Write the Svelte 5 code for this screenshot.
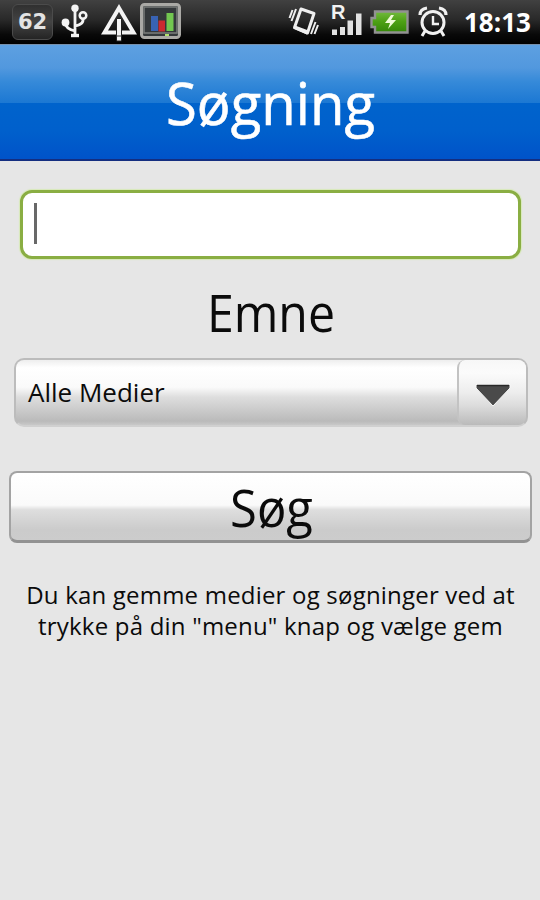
<script lang="ts">
  let query = '';
  let category = 'Alle Medier';
  let time = '18:13';
  let batteryLevel = '62';
</script>

<div class="screen">
  <div class="status-bar">
    <div class="level">{batteryLevel}</div>
    <svg class="usb" width="28" height="34" viewBox="0 0 28 34" fill="none" stroke="#f4f4f4" stroke-width="2.8">
      <path d="M14 4V31M4 19Q5 25 14 27M14 22Q24 20 21.500 14" />
      <circle cx="14" cy="4.200" r="3.700" fill="#f4f4f4" stroke="none" />
      <circle cx="4.500" cy="18.500" r="3.900" fill="#f4f4f4" stroke="none" />
      <circle cx="22" cy="11.500" r="3.300" stroke-width="2.500" />
      <path d="M10 31.500h8" stroke-width="3.400" />
    </svg>
    <svg class="warn" width="36" height="38" viewBox="0 0 36 38">
      <path d="M18 4L32.500 28.500H3.500Z" fill="none" stroke="#f4f4f4" stroke-width="4" />
      <path d="M15.500 14.500h5v22.500h-5z" fill="#f4f4f4" stroke="#222" stroke-width="1" />
      <path d="M15 32h6" stroke="#333" stroke-width="1" />
    </svg>
    <svg class="chart" width="42" height="37" viewBox="0 0 42 37">
      <rect x="1.500" y="1.500" width="38" height="33" rx="3" fill="#34383a" stroke="#aaa9a5" stroke-width="3" />
      <rect x="4" y="4" width="33" height="26" fill="none" stroke="#7b7e7c" stroke-width="1.500" />
      <rect x="11" y="13" width="7" height="15" fill="#3863b4" />
      <rect x="18.500" y="17.500" width="6.500" height="11" fill="#cb2a30" />
      <rect x="26.500" y="10" width="7" height="18" fill="#72c750" />
      <rect x="25" y="31" width="4" height="2" fill="#b1e26c" />
    </svg>
    <div class="spacer"></div>
    <svg class="vibrate" width="31" height="32" viewBox="0 0 31 32" fill="none" stroke="#efefef">
      <path d="M13 3L26 7.500L19.500 27L6.500 21.500Z" stroke-width="3" stroke-linejoin="round" />
      <path d="M7 19.500l13.500 5-1.500 4-13.500-6z" fill="#efefef" stroke="none" />
      <path d="M8 3L3.500 15M4.500 4L1.500 12M27.500 16L23 28M30 19l-3.500 9" stroke-width="2" />
    </svg>
    <svg class="signal" width="32" height="36" viewBox="0 0 32 36">
      <text x="0" y="19" class="roaming">R</text>
      <path d="M1 29.500h5v5.500H1zM9 27h5v8H9zM16.500 20.500h5.500v14.500h-5.500zM25 13.500h5.500v21.500h-5.500z" fill="#e2e2e2" />
    </svg>
    <svg class="battery" width="39" height="24" viewBox="0 0 39 24">
      <defs>
        <linearGradient id="charge" x1="0" y1="0" x2="0" y2="1">
          <stop offset="0" stop-color="#73ba3f" />
          <stop offset=".48" stop-color="#4da114" />
          <stop offset="1" stop-color="#348608" />
        </linearGradient>
      </defs>
      <path d="M5 1.500H37.500V22.500H5V17H1.500V8H5Z" fill="url(#charge)" stroke="#929292" stroke-width="2.400" />
      <path d="M21 5L15 13h5l-2 6 8-9h-5l3-5z" fill="#f0fbd9" />
    </svg>
    <svg class="alarm" width="30" height="32" viewBox="0 0 30 32" fill="none" stroke="#f1f1f1">
      <circle cx="15" cy="16.500" r="11" stroke-width="3" />
      <path d="M15 10v8h6" stroke-width="2.400" />
      <path d="M2 9Q2 3 9 2M28 9Q28 3 21 2" stroke-width="3.200" />
      <path d="M7 25l-3 5M23 25l3 5" stroke-width="3" />
    </svg>
    <div class="clock">{time}</div>
  </div>

  <header><h1>Søgning</h1></header>

  <main>
    <label class="search-box">
      <span class="caret"></span>
      <input type="text" aria-label="Søgning" bind:value={query} />
    </label>
    <h2>Emne</h2>
    <button class="spinner">
      <span class="value">{category}</span>
      <span class="arrow">
        <svg width="36" height="24" viewBox="0 0 36 24">
          <path d="M1 1.500H35V5L18 23L1 5Z" fill="#4a4a4a" stroke="#f7f7f7" />
          <path d="M2 2.500H34" stroke="#282828" stroke-width="1.500" />
        </svg>
      </span>
    </button>
    <button class="search-btn"><span>Søg</span></button>
    <p>Du kan gemme medier og søgninger ved at<br />trykke på din "menu" knap og vælge gem</p>
  </main>
</div>

<style>
  :global(body) {
    margin: 0;
    background: #e6e6e6;
  }
  .screen {
    width: 540px;
    height: 900px;
    overflow: hidden;
    background: #e6e6e6;
    color: #0b0b0b;
    font-family: 'Open Sans', 'Noto Sans', sans-serif;
  }
  .status-bar {
    display: flex;
    align-items: flex-start;
    box-sizing: border-box;
    height: 44px;
    padding: 0 10px 0 12px;
    background: linear-gradient(#414141, #292929 45%, #090909 78%, #000);
  }
  .status-bar svg {
    flex: none;
  }
  .level {
    box-sizing: border-box;
    width: 41px;
    height: 36px;
    margin-top: 4px;
    border: 1px solid #4b4b4b;
    border-radius: 6px;
    background: linear-gradient(#303030, #444 50%, #242424);
    color: #e3e3e3;
    font: bold 21px/34px 'DejaVu Sans', sans-serif;
    text-align: center;
  }
  .usb {
    margin: 4px 0 0 8px;
  }
  .warn {
    margin: 4px 0 0 12px;
  }
  .chart {
    margin: 3px 0 0 3px;
  }
  .spacer {
    flex: 1;
  }
  .vibrate {
    margin: 6px 12px 0 0;
  }
  .signal {
    margin-right: 7px;
  }
  .roaming {
    fill: #f2f2f2;
    font: bold 20px 'Liberation Sans', sans-serif;
  }
  .battery {
    margin: 10px 9px 0 0;
  }
  .alarm {
    margin: 6px 16px 0 0;
  }
  .clock {
    width: 66px;
    margin-top: 3px;
    color: #fff;
    font-size: 26px;
    font-weight: bold;
    line-height: 38px;
    white-space: nowrap;
  }
  header {
    box-sizing: border-box;
    height: 117px;
    border-top: 1px solid #7790ac;
    border-bottom: 2px solid #142e80;
    background: linear-gradient(#5da0e1, #5298de 20%, #368ad9 32%, #1c78d3 50.8%, #0063cc 51.2%, #0060cc 75%, #0053c9);
  }
  h1,
  h2 {
    margin: 0;
    font-weight: normal;
    text-align: center;
  }
  h1 {
    padding: 18px 0 0 1px;
    color: #fff;
    font-size: 58px;
    line-height: 80px;
    transform: scaleX(0.97);
    -webkit-text-stroke: 0.6px #fff;
  }
  main {
    display: flex;
    flex-direction: column;
    padding: 29px 8px 0 9px;
  }
  .search-box {
    display: flex;
    box-sizing: border-box;
    height: 69px;
    margin: 0 11px;
    padding: 10px 10px 0 11px;
    border: 3px solid #8aae43;
    border-radius: 12px;
    background: #fff;
    box-shadow: 0 0 1px 1px #d7e9b8;
  }
  .caret {
    width: 3px;
    height: 41px;
    background: #686868;
  }
  input {
    flex: 1;
    min-width: 0;
    height: 42px;
    padding: 0 6px;
    border: 0;
    outline: 0;
    background: none;
    font: 27px 'Open Sans', sans-serif;
  }
  h2 {
    margin-top: 18px;
    padding-left: 1px;
    font-size: 51px;
    line-height: 70px;
    transform: scaleX(0.945);
  }
  button {
    box-sizing: border-box;
    padding: 0;
    color: #0b0b0b;
    font-family: inherit;
  }
  .spinner {
    display: flex;
    width: 514px;
    height: 69px;
    margin: 11px 0 0 5px;
    border: 2px solid #bcbcbc;
    border-bottom-color: #d0d0d0;
    border-radius: 10px;
    background: linear-gradient(#eee, #fff 12%, #fafafa 42%, #dedede 57%, #bababa 94%, #c8c8c8);
  }
  .value {
    flex: 1;
    padding-left: 12px;
    font-size: 26px;
    line-height: 65px;
    text-align: left;
  }
  .arrow {
    display: flex;
    align-items: center;
    justify-content: center;
    box-sizing: border-box;
    width: 69px;
    height: 65px;
    padding-top: 5px;
    border-left: 2px solid #c3c3c3;
    border-radius: 8px;
    background: linear-gradient(#f7f7f7, #fbfbfb 20%, #ededed 50%, #dcdcdc 70%, #bababa);
  }
  .search-btn {
    height: 72px;
    margin-top: 44px;
    padding: 2px 0 0 2px;
    border: 2px solid #a3a3a3;
    border-bottom: 3px solid #929292;
    border-radius: 8px;
    background: linear-gradient(#fff, #fafafa 48%, #dedede 55%, #cbcbcb 85%, #ccc);
    font-size: 51px;
    line-height: 65px;
  }
  .search-btn span {
    display: block;
    transform: scaleX(0.96);
  }
  p {
    margin: 36px 0 0;
    font-size: 24px;
    line-height: 31px;
    letter-spacing: 0.2px;
    text-align: center;
    white-space: nowrap;
  }
</style>
